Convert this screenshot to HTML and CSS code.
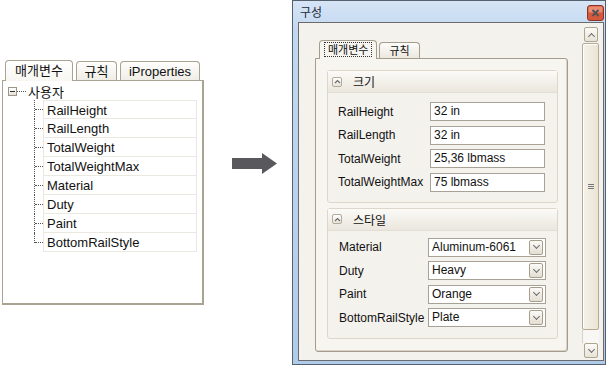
FILE: index.html
```html
<!DOCTYPE html>
<html lang="ko">
<head>
<meta charset="UTF-8">
<title>구성</title>
<link rel="stylesheet" href="styles.css">
</head>
<body>
  <div class="stage">

    <!-- parameter browser -->
    <section class="browser">
      <div class="tabs">
        <span class="tab on">매개변수</span>
        <span class="tab">규칙</span>
        <span class="tab">iProperties</span>
      </div>
      <div class="pane">
        <div class="root">
          <span class="toggle"></span><span class="stub"></span><span class="root-label">사용자</span>
        </div>
        <ul class="kids">
          <li><span>RailHeight</span></li>
          <li><span>RailLength</span></li>
          <li><span>TotalWeight</span></li>
          <li><span>TotalWeightMax</span></li>
          <li><span>Material</span></li>
          <li><span>Duty</span></li>
          <li><span>Paint</span></li>
          <li><span>BottomRailStyle</span></li>
        </ul>
      </div>
    </section>

    <!-- arrow -->
    <svg class="arrow" width="46" height="21" viewBox="0 0 46 21">
      <polygon points="0,5 30,5 30,0 45,10.5 30,21 30,16 0,16" fill="#59595d"/>
    </svg>

    <!-- dialog -->
    <section class="win">
      <header class="titlebar">
        <span class="title">구성</span>
        <svg class="close" width="17" height="16" viewBox="0 0 17 16">
          <rect x="0.5" y="0.5" width="16" height="15" rx="2.5" fill="#d4583b" stroke="#8e3424"/>
          <rect x="1.5" y="1.5" width="14" height="6" rx="1.5" fill="#e88c72"/>
          <path d="M5.5 5 L11.5 11 M11.5 5 L5.5 11" stroke="#4e5258" stroke-width="1.8"/>
        </svg>
      </header>
      <div class="client">
        <div class="tabctl">
          <div class="dtabs">
            <span class="dtab on"><span class="focus">매개변수</span></span>
            <span class="dtab">규칙</span>
          </div>
          <div class="dpanel">

            <div class="group">
              <div class="ghead">
                <span class="collapse"><svg width="7" height="5" viewBox="0 0 7 5"><path d="M1 4 L3.5 1.5 L6 4" fill="none" stroke="#6a6a6a" stroke-width="1.2"/></svg></span>
                <span>크기</span>
              </div>
              <div class="gbody props">
                <span class="lbl">RailHeight</span><span class="field">32 in</span>
                <span class="lbl">RailLength</span><span class="field">32 in</span>
                <span class="lbl">TotalWeight</span><span class="field">25,36 lbmass</span>
                <span class="lbl">TotalWeightMax</span><span class="field">75 lbmass</span>
              </div>
            </div>

            <div class="group">
              <div class="ghead">
                <span class="collapse"><svg width="7" height="5" viewBox="0 0 7 5"><path d="M1 4 L3.5 1.5 L6 4" fill="none" stroke="#6a6a6a" stroke-width="1.2"/></svg></span>
                <span>스타일</span>
              </div>
              <div class="gbody picks">
                <span class="lbl">Material</span><span class="pick"><span class="val">Aluminum-6061</span><span class="drop"></span></span>
                <span class="lbl">Duty</span><span class="pick"><span class="val">Heavy</span><span class="drop"></span></span>
                <span class="lbl">Paint</span><span class="pick"><span class="val">Orange</span><span class="drop"></span></span>
                <span class="lbl">BottomRailStyle</span><span class="pick"><span class="val">Plate</span><span class="drop"></span></span>
              </div>
            </div>

          </div>
        </div>

        <div class="vscroll">
          <span class="sbtn up"></span>
          <span class="thumb"><span class="grip"></span></span>
          <span class="track"></span>
          <span class="sbtn down"></span>
        </div>
      </div>
    </section>

  </div>
</body>
</html>
```

FILE: styles.css
```css
body{
  margin:0;
  background:#fff;
  font-family:"Liberation Sans","Noto Sans CJK KR",sans-serif;
  color:#111;
}
.stage{
  display:flex;
  align-items:flex-start;
  width:607px;
  height:368px;
  overflow:hidden;
}

/* ---- left: parameter browser ---- */
.browser{margin:59px 0 0 2px;width:202px;}
.tabs{display:flex;align-items:flex-end;gap:3px;padding-left:3px;height:21px;}
.tab{
  height:19px;line-height:19px;
  padding:0 6px;
  font-size:13px;
  border:1px solid #aaa292;border-bottom:none;
  border-radius:4px 4px 0 0;
  background:linear-gradient(#fefefd,#efede6);
  box-sizing:border-box;
}
.tab:nth-child(1){width:68px;text-align:center;}
.tab:nth-child(2){width:41px;text-align:center;}
.tab:nth-child(3){width:80px;text-align:center;}
.tab.on{height:21px;position:relative;z-index:1;margin-bottom:-1px;background:linear-gradient(#fff,#f7f6f1);}
.pane{
  height:225px;
  box-sizing:border-box;
  border:1px solid #aaa292;
  border-right-width:2px;border-bottom-width:2px;
  background:#fff;
  padding-top:1px;
}
.root{display:flex;align-items:center;height:18px;padding-left:5px;font-size:13px;}
.toggle{
  width:9px;height:9px;box-sizing:border-box;
  border:1px solid #9b9689;
  background:linear-gradient(#fff,#e6e2d8);
  display:flex;align-items:center;justify-content:center;
}
.toggle::after{content:"";width:5px;border-top:1px solid #333;}
.stub{width:9px;border-top:1px dotted #555;}
.root-label{margin-left:2px;}
.kids{list-style:none;margin:0 5px 0 31px;padding:0;}
.kids li{position:relative;padding-left:9px;}
.kids li::before{content:"";position:absolute;left:0;top:0;bottom:0;border-left:1px dotted #555;}
.kids li:last-child::before{bottom:auto;height:10px;}
.kids li::after{content:"";position:absolute;left:1px;top:9px;width:8px;border-top:1px dotted #555;}
.kids li span{
  display:block;height:19px;line-height:19px;box-sizing:border-box;
  padding-left:3px;font-size:13px;
  border:1px solid #ebe8e0;border-top:none;
}
.kids li:first-child span{border-top:1px solid #ebe8e0;}

.arrow{margin:153px 0 0 28px;flex:none;}

/* ---- right: dialog ---- */
.win{
  margin-left:14px;
  width:314px;height:365px;
  box-sizing:border-box;
  border:1px solid #566170;
  padding:0 1px 3px 5px;
  background:linear-gradient(#d6e5f6,#c2d8f0 30px,#b0cbea);
  display:flex;flex-direction:column;
  flex:none;
}
.titlebar{height:21px;flex:none;display:flex;align-items:center;justify-content:space-between;}
.title{font-size:12px;padding-left:2px;font-family:"Noto Sans CJK KR",sans-serif;color:#1b2a3c;}
.close{margin-top:3px;flex:none;}
.client{
  flex:1;
  border:1px solid #6b6b6b;
  background:#f4f2ed;
  display:flex;
  padding:0 3px 0 0;
}
.tabctl{width:253px;margin:17px 0 0 16px;display:flex;flex-direction:column;}
.dtabs{display:flex;align-items:flex-end;gap:2px;padding-left:4px;height:18px;}
.dtab{
  height:16px;box-sizing:border-box;
  padding:0 9px;
  font-size:11px;line-height:15px;
  font-family:"Noto Sans CJK KR",sans-serif;
  border:1px solid #a49c8c;border-bottom:none;border-radius:4px 4px 0 0;
  background:linear-gradient(#fdfcfa,#ece8df);
}
.dtab.on{height:19px;position:relative;z-index:1;margin-bottom:-1px;background:#f7f5f0;padding:1px 4px 0;}
.focus{border:1px dotted #333;padding:0 3px;display:inline-block;line-height:13px;}
.dpanel{
  height:294px;box-sizing:border-box;
  border:1px solid #a49c8c;border-radius:0 3px 3px 3px;
  box-shadow:inset -1px -1px 0 #d9d3c6;
  background:#f7f5f0;
  padding:11px 0 0 11px;
  display:flex;flex-direction:column;gap:5px;
}
.group{
  width:231px;box-sizing:border-box;
  border:1px solid #ddd7cb;border-radius:3px;
  background:#f4f2ed;
}
.ghead{
  height:22px;box-sizing:border-box;
  border-bottom:1px solid #e3ded3;
  background:linear-gradient(#fbfaf7,#ebe7de);
  display:flex;align-items:center;gap:11px;
  padding-left:4px;
  font-size:12px;font-family:"Noto Sans CJK KR",sans-serif;
}
.collapse{
  width:10px;height:10px;box-sizing:border-box;
  border:1px solid #b3aa99;border-radius:2px;
  background:linear-gradient(#fff,#e9e4da);
  display:flex;align-items:center;justify-content:center;
}
.gbody{display:grid;row-gap:4.5px;align-items:center;font-size:12px;}
.props{grid-template-columns:92px 115px;padding:9px 0 10px 10px;}
.picks{grid-template-columns:89px 118px;padding:7px 0 11px 11px;}
.lbl{white-space:nowrap;}
.field,.pick{
  height:19px;box-sizing:border-box;
  border:1px solid #a8a195;background:#fff;
  line-height:17px;padding-left:3px;
}
.pick{display:flex;align-items:center;padding-right:2px;}
.val{flex:1;}
.drop{
  width:14px;height:15px;box-sizing:border-box;
  border:1px solid #a89e8c;border-radius:2px;
  background:linear-gradient(#fbfaf7,#e4ded2);
  display:flex;align-items:center;justify-content:center;
}
.drop::after{
  content:"";width:4px;height:4px;margin-top:-3px;
  border-right:1.3px solid #6c6c6c;border-bottom:1.3px solid #6c6c6c;
  transform:rotate(45deg);
}
.vscroll{
  width:17px;margin:4px 0 0 14px;
  height:331px;
  display:flex;flex-direction:column;
}
.sbtn{
  height:15px;flex:none;box-sizing:border-box;margin:0 1px 0 2px;
  border:1px solid #aea491;border-radius:2px;
  background:linear-gradient(#fcfbf8,#e8e2d6);
  display:flex;align-items:center;justify-content:center;
}
.sbtn::after{
  content:"";width:4px;height:4px;
  border-right:1.3px solid #6c6c6c;border-bottom:1.3px solid #6c6c6c;
}
.sbtn.up::after{transform:rotate(-135deg);margin-top:3px;}
.sbtn.down::after{transform:rotate(45deg);margin-top:-3px;}
.thumb{
  height:287px;flex:none;box-sizing:border-box;margin-top:1px;
  border:1px solid #b4aa97;border-radius:2px;
  background:linear-gradient(90deg,#f6f2ea,#ebe4d5);
  box-shadow:inset 1px 1px 0 #fff;
  display:flex;align-items:center;justify-content:center;
}
.grip{width:6px;height:5px;border-top:1px solid #777;border-bottom:1px solid #777;box-sizing:border-box;}
.grip::after{content:"";display:block;border-top:1px solid #777;margin-top:1px;}
.track{height:13px;flex:none;background:#f8f7f3;border-left:1px solid #d6d0c4;}
```
